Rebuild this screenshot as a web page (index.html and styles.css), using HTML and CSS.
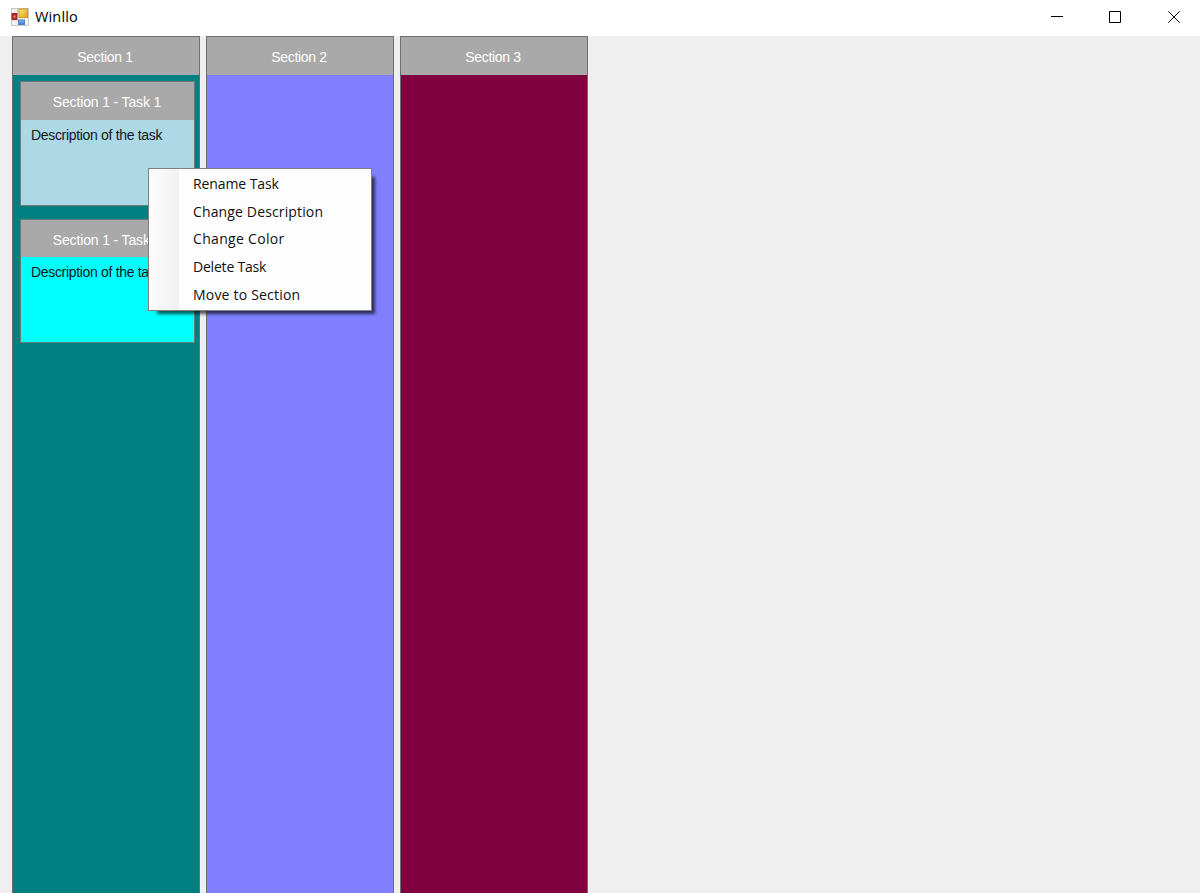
FILE: index.html
```html
<!DOCTYPE html>
<html lang="en">
<head>
<meta charset="utf-8">
<title>Winllo</title>
<link rel="stylesheet" href="styles.css">
</head>
<body>
<header class="titlebar">
  <svg class="app-icon" width="18" height="18" viewBox="0 0 18 18">
    <defs>
      <linearGradient id="y" x2="1" y2="1"><stop stop-color="#ffe680"/><stop offset="1" stop-color="#e0a410"/></linearGradient>
      <linearGradient id="b" x2="0" y2="1"><stop stop-color="#86b9f5"/><stop offset="1" stop-color="#3c78cc"/></linearGradient>
    </defs>
    <rect x=".5" y=".5" width="17" height="17" fill="#f1f1f1" stroke="#c9c9c9"/>
    <path d="M1 6H7M1 12H7M6.500 1V5M12.500 12V17" stroke="#cfcfcf"/>
    <rect x="1" y="5.500" width="5" height="6" fill="#b92e27" stroke="#982c27"/>
    <rect x="2.500" y="7.500" width="2" height="2" fill="#e78076"/>
    <rect x="8" y="1" width="8.500" height="8.500" fill="url(#y)" stroke="#c99a25"/>
    <rect x="7.500" y="12" width="6" height="4.500" fill="url(#b)" stroke="#4d80c4"/>
  </svg>
  <span class="title">Winllo</span>
  <div class="controls">
    <svg width="12" height="12" viewBox="0 0 12 12"><path d="M0 5.500H12"/></svg>
    <svg width="12" height="12" viewBox="0 0 12 12"><path d="M.5.5H11.500V11.500H.5Z"/></svg>
    <svg width="12" height="12" viewBox="0 0 12 12"><path d="M.3.3L11.700 11.700M11.700.3L.3 11.700"/></svg>
  </div>
</header>
<main class="board">
  <section class="section teal">
    <h2 class="section-head">Section 1</h2>
    <article class="task light">
      <h3 class="task-head">Section 1 - Task 1</h3>
      <p class="description">Description of the task</p>
    </article>
    <article class="task cyan">
      <h3 class="task-head">Section 1 - Task 2</h3>
      <p class="description">Description of the task</p>
    </article>
  </section>
  <section class="section violet"><h2 class="section-head">Section 2</h2></section>
  <section class="section maroon"><h2 class="section-head">Section 3</h2></section>
</main>
<ul class="menu">
  <li class="rename">Rename Task</li>
  <li class="describe">Change Description</li>
  <li class="color">Change Color</li>
  <li class="delete">Delete Task</li>
  <li class="move">Move to Section</li>
</ul>
</body>
</html>
```
FILE: styles.css
```css
* { box-sizing: border-box; margin: 0; padding: 0; }
body {
  height: 893px;
  overflow: hidden;
  background: #efefef;
  font-family: "Open Sans", "Noto Sans", sans-serif;
  font-size: 14px;
  display: flex;
  flex-direction: column;
}
.titlebar {
  height: 36px;
  flex: none;
  display: flex;
  align-items: center;
  background: #fff;
  padding: 0 20px 2px 11px;
}
.app-icon { margin-top: -1px; }
.title { margin-left: 6px; font-size: 14.5px; line-height: 20px; letter-spacing: .15px; color: #000; }
.controls { margin-left: auto; display: flex; gap: 46px; }
.controls svg { fill: none; stroke: #000; stroke-width: 1; display: block; }
.controls svg:last-child { margin-left: 1px; }
.board { flex: 1; display: flex; gap: 6px; padding-left: 12px; }
.section { width: 188px; border: 1px solid #6c6f6f; border-bottom: 0; }
.teal { background: #008080; }
.violet { background: #8080ff; }
.maroon { background: #800040; }
.section-head, .task-head {
  background: #a9a9a9;
  color: #fff;
  font-family: "Liberation Sans", sans-serif;
  font-weight: 400;
  font-size: 14px;
  text-align: center;
  white-space: nowrap;
}
.section-head { height: 38px; line-height: 40px; letter-spacing: -0.3px; padding-right: 2px; }
.task {
  width: 175px;
  height: 125px;
  margin: 6px 0 13px 7px;
  border: 1px solid #6c7a7a;
}
.task + .task { margin-top: 0; height: 124px; }
.task-head { height: 38px; line-height: 40px; letter-spacing: -0.14px; padding-right: 1px; }
.cyan .task-head { height: 37px; }
.light { background: #add8e6; }
.cyan { background: #00ffff; }
.description {
  padding: 6px 0 0 10px;
  font-family: "Liberation Sans", sans-serif;
  line-height: 19px;
  letter-spacing: -0.32px;
  white-space: nowrap;
  color: #10181b;
}
.menu {
  position: absolute;
  left: 148px;
  top: 168px;
  width: 224px;
  height: 143px;
  padding: 1px 0 0 44px;
  list-style: none;
  border: 1px solid #808080;
  background: linear-gradient(90deg, #fcfcfc, #f1f1f1 30px, #fdfdfd 30px);
  box-shadow: 6px 6px 3px -3px rgba(0, 0, 0, .65);
  color: #111;
}
.menu li { height: 27.700px; line-height: 27px; white-space: nowrap; }
.rename { letter-spacing: -.1px; }
.describe { letter-spacing: .14px; }
.color { letter-spacing: .32px; }
.delete { letter-spacing: -.2px; }
.move { letter-spacing: .2px; }
```
